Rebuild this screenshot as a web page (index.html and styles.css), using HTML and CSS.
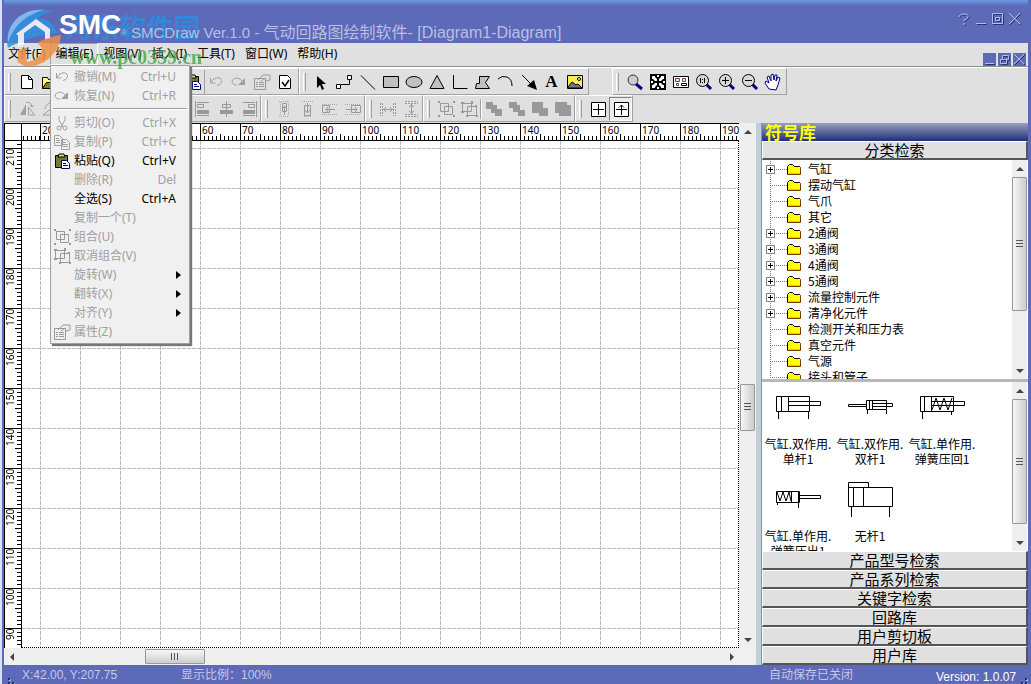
FILE: index.html
```html
<!DOCTYPE html>
<html lang="zh-CN">
<head>
<meta charset="utf-8">
<title>SMCDraw Ver.1.0 - 气动回路图绘制软件- [Diagram1-Diagram]</title>
<link rel="stylesheet" href="styles.css">
</head>
<body>
<svg class="defs" aria-hidden="true">
  <symbol id="i-new" viewBox="0 0 20 20"><path d="M4.500 3.500h7l4 4v9h-11zM11.500 3.500v4h4" fill="#fff" stroke="#000"/></symbol>
  <symbol id="i-open" viewBox="0 0 20 20"><path d="M2.500 16.500v-11h5l1 2h6v3" fill="#ff8" stroke="#000"/><path d="M2.500 16.500l4-6h12l-4 6z" fill="#880" stroke="#000"/></symbol>
  <symbol id="i-save" viewBox="0 0 20 20"><path d="M3.500 3.500h13v13h-13z" fill="#880" stroke="#000"/><path d="M6 4h8v5H6z" fill="#fff"/></symbol>
  <symbol id="i-paste" viewBox="0 0 20 20"><path d="M3.500 4.500h12v12h-12z" fill="#77773c" stroke="#000"/><path d="M6 6l1-3h5l1 3z" fill="#dd6" stroke="#000"/><path d="M9.500 9.500h5l3 3v5h-8z" fill="#fff" stroke="#00007a"/><path d="M11 12.500h3M11 14.500h5" stroke="#00007a"/></symbol>
  <symbol id="i-undo" viewBox="0 0 20 20"><path d="M4.500 6v5h5M5 10.500l2-3q7-4 8.500 1 0 4-4.500 5" fill="none" stroke="#a0a0a0"/></symbol>
  <symbol id="i-redo" viewBox="0 0 20 20"><path d="M8 13q-5 0-5-4 3-5 8.500-1.500l3 3" fill="none" stroke="#a0a0a0"/><path d="M16 6v7H9z" fill="#a0a0a0"/></symbol>
  <symbol id="i-prop" viewBox="0 0 20 20"><path d="M2.500 6.500h11v11h-11z" fill="none" stroke="#999"/><path d="M4 10.500h2M7 10.500h5M4 12.500h2M7 12.500h5M4 14.500h2M7 14.500h5" stroke="#999"/><path d="M6 8l5-5h7v5l-4 1-1-3-4 3" fill="none" stroke="#999"/></symbol>
  <symbol id="i-check" viewBox="0 0 20 20"><path d="M4.500 3.500h8l3 3v10h-11z" fill="#fff" stroke="#000"/><path d="M7 10l3 4 4-6" fill="none" stroke="#000" stroke-width="1.500"/></symbol>
  <symbol id="i-cut" viewBox="0 0 20 20"><path d="M7 3v4l4 7M13 3v4l-4 7" fill="none" stroke="#a0a0a0"/><circle cx="7" cy="15" r="2" fill="none" stroke="#a0a0a0"/><circle cx="13" cy="15" r="2" fill="none" stroke="#a0a0a0"/></symbol>
  <symbol id="i-copy" viewBox="0 0 20 20"><path d="M2.500 3.500h5l3 3v7h-8zM4 6.500h3M4 8.500h4M4 10.500h4M9.500 7.500h5l3 3v7h-8zM11 10.500h3M11 12.500h5M11 14.500h5" fill="#eee" stroke="#a0a0a0"/></symbol>
  <symbol id="i-pointer" viewBox="0 0 20 20"><path d="M5 4v12l3-3 2 5 2-1-2-5h4z"/></symbol>
  <symbol id="i-conn" viewBox="0 0 20 20"><path d="M1.500 12.500h4v4h-4zM12.500 3.500h4v4h-4z" fill="#fff" stroke="#000"/><path d="M6 12.500h8.500V8" fill="none" stroke="#000"/></symbol>
  <symbol id="i-line" viewBox="0 0 20 20"><path d="M3 3.500l14 14" stroke="#000"/></symbol>
  <symbol id="i-rect" viewBox="0 0 20 20"><path d="M2.500 4.500h15v11h-15z" fill="#c0c0c0" stroke="#000"/></symbol>
  <symbol id="i-ell" viewBox="0 0 20 20"><ellipse cx="10" cy="10" rx="8" ry="5.500" fill="#c0c0c0" stroke="#000"/></symbol>
  <symbol id="i-tri" viewBox="0 0 20 20"><path d="M10 3.500l7 13H3z" fill="#c0c0c0" stroke="#000"/></symbol>
  <symbol id="i-l" viewBox="0 0 20 20"><path d="M3.500 3v13.500h14" fill="none" stroke="#000"/></symbol>
  <symbol id="i-poly" viewBox="0 0 20 20"><path d="M6.500 4.500h10l-4 6 4 6H2.500l1-5h3z" fill="#c0c0c0" stroke="#000"/></symbol>
  <symbol id="i-arc" viewBox="0 0 20 20"><path d="M2 7q4-4 9-2t5 9" fill="none" stroke="#000"/></symbol>
  <symbol id="i-arrow" viewBox="0 0 20 20"><path d="M3 3l9 9" stroke="#000"/><path d="M18 18l-10-4 7-6z"/></symbol>
  <symbol id="i-pic" viewBox="0 0 20 20"><path d="M2.500 3.500h15v13h-15z" fill="#f4ee58" stroke="#000"/><path d="M3 15l4-5 4 3 2-1 4 4H3z" fill="#778" stroke="#000"/><circle cx="14" cy="7" r="1.500" fill="#fff" stroke="#000"/></symbol>
  <symbol id="i-mag" viewBox="0 0 20 20"><path d="M11 12l6 5" stroke="#00007f" stroke-width="3"/><circle cx="8" cy="8" r="5" fill="#ccc" stroke="#333"/></symbol>
  <symbol id="i-mag1" viewBox="0 0 20 20"><path d="M12 12l5 5" stroke="#00007f" stroke-width="3"/><circle cx="8.500" cy="8.500" r="6" fill="#d8d8d8" stroke="#000"/><path d="M6.500 6v5M10.500 6v5M8.500 7v1M8.500 10v1" stroke="#000"/></symbol>
  <symbol id="i-magp" viewBox="0 0 20 20"><path d="M12 12l5 5" stroke="#00007f" stroke-width="3"/><circle cx="8.500" cy="8.500" r="6" fill="#d8d8d8" stroke="#000"/><path d="M5 8.500h7M8.500 5v7" stroke="#000"/></symbol>
  <symbol id="i-magm" viewBox="0 0 20 20"><path d="M12 12l5 5" stroke="#00007f" stroke-width="3"/><circle cx="8.500" cy="8.500" r="6" fill="#d8d8d8" stroke="#000"/><path d="M5 8.500h7" stroke="#000"/></symbol>
  <symbol id="i-fit" viewBox="0 0 20 20"><path d="M2 2h16v16H2z"/><path d="M4 4h3v1l2 2v2H7L5 7H4zM16 4h-3v1l-2 2v2h2l2-2h1zM4 16h3v-1l2-2v-2H7l-2 2H4zM16 16h-3v-1l-2-2v-2h2l2 2h1zM9 3h2v2H9zM9 15h2v2H9zM3 9h2v2H3zM15 9h2v2h-2z" fill="#fff"/></symbol>
  <symbol id="i-page" viewBox="0 0 20 20"><path d="M2.500 4.500h15v11h-15z" fill="#fff" stroke="#000"/><path d="M4.500 6.500h4v3h-4zM5.500 11.500h2v2h-2zM11.500 6.500h3v3h-3z" fill="#eee" stroke="#744"/><path d="M10.500 11.500h5v2h-5z" fill="none" stroke="#000"/></symbol>
  <symbol id="i-hand" viewBox="0 0 20 20"><path d="M6 17l-4-6 1-2 3 2-2-6 2-1 2 5V3l2-1 1 6 1-5h2l-1 6 2-4 2 1-2 7-2 5z" fill="#fff" stroke="#00007f"/></symbol>
  <symbol id="i-flip" viewBox="0 0 20 20"><path d="M9 5v11H3z" fill="#a0a0a0"/><path d="M11.500 8v8h6zM9 3.500q5-1 6 4M13 6l2 2 2-2" fill="none" stroke="#a0a0a0"/></symbol>
  <symbol id="i-rot" viewBox="0 0 20 20"><path d="M3 16h13L12 9zM5 10q0-5 6-6M9 2l3 2-2 3" fill="none" stroke="#a0a0a0"/></symbol>
  <symbol id="i-al" viewBox="0 0 20 20"><path d="M2.500 2v16M4 3.500h12M4 16.500h12" stroke="#999"/><path d="M4.500 5.500h6v3h-6z" fill="none" stroke="#999"/><path d="M4 11h12v4H4z" fill="#999"/></symbol>
  <symbol id="i-ac" viewBox="0 0 20 20"><path d="M10.500 2v16" stroke="#999"/><path d="M6.500 5.500h8v3h-8z" fill="none" stroke="#999"/><path d="M4 11h13v4H4z" fill="#999"/></symbol>
  <symbol id="i-ar" viewBox="0 0 20 20"><path d="M17.500 2v16M4 3.500h12M4 16.500h12" stroke="#999"/><path d="M9.500 5.500h6v3h-6z" fill="none" stroke="#999"/><path d="M4 11h12v4H4z" fill="#999"/></symbol>
  <symbol id="i-v1" viewBox="0 0 20 20"><path d="M5 2.500h10M6.500 3v14M14.500 3v14M5 17.500h10" stroke="#aaa" stroke-dasharray="1 1"/><path d="M8.500 4.500h4v8h-4zM10.500 7v9M9 9l1.500-2L12 9" fill="none" stroke="#999"/></symbol>
  <symbol id="i-v2" viewBox="0 0 20 20"><path d="M5 2.500h11M7 17.500h7" stroke="#aaa" stroke-dasharray="1 1"/><path d="M7.500 6.500h6v10h-6zM10.500 4v9M8 11l2.500 3L13 11" fill="none" stroke="#999"/></symbol>
  <symbol id="i-h1" viewBox="0 0 20 20"><path d="M2 5.500h16M2 15.500h16" stroke="#aaa" stroke-dasharray="1 1"/><path d="M2.500 6.500h7v7h-7zM15 10.500H5M8 8l-2 2.500L8 13" fill="none" stroke="#999"/></symbol>
  <symbol id="i-h2" viewBox="0 0 20 20"><path d="M2 5.500h16M2 15.500h16" stroke="#aaa" stroke-dasharray="1 1"/><path d="M8.500 6.500h9v7h-9zM3 10.500h11M12 8l2 2.500-2 2.500" fill="none" stroke="#999"/></symbol>
  <symbol id="i-sh" viewBox="0 0 20 20"><path d="M2.500 4v13M4.500 4v13M15.500 4v13M17.500 4v13" stroke="#999" stroke-dasharray="2 1"/><path d="M5 10.500h10M8 8l-2 2.500L8 13M12 8l2 2.500-2 2.500" fill="none" stroke="#999"/></symbol>
  <symbol id="i-sv" viewBox="0 0 20 20"><path d="M4 2.500h13M4 4.500h13M4 15.500h13M4 17.500h13" stroke="#999" stroke-dasharray="2 1"/><path d="M10.500 5v10M8 8l2.500-2L13 8M8 12l2.500 2 2.500-2" fill="none" stroke="#999"/></symbol>
  <symbol id="i-grp" viewBox="0 0 20 20"><path d="M4.500 4.500h8v8h-8zM8.500 7.500h8v8h-8z" fill="none" stroke="#999"/><path d="M2 2h2v2H2zM17 2h2v2h-2zM2 16h2v2H2zM17 16h2v2h-2z" fill="#999"/></symbol>
  <symbol id="i-ungrp" viewBox="0 0 20 20"><path d="M3.500 4.500h9v8h-9zM8.500 7.500h9v9h-9z" fill="none" stroke="#999"/><path d="M2 3h3v2H2zM12 2h2v3h-2zM2 12h3v2H2zM16 6h2v2h-2zM17 16h2v2h-2zM7 16h2v2H7z" fill="#999"/></symbol>
  <symbol id="i-o1" viewBox="0 0 20 20"><path d="M2 3h7v3h4v4h5v7h-7v-3H7v-4H2z" fill="#999"/></symbol>
  <symbol id="i-o2" viewBox="0 0 20 20"><path d="M2 3h8v3h3v5h5v6h-7v-4H6V9H2z" fill="#999"/></symbol>
  <symbol id="i-o3" viewBox="0 0 20 20"><path d="M2 3h11v6h5v8h-9v-3H2z" fill="#999"/></symbol>
  <symbol id="i-o4" viewBox="0 0 20 20"><path d="M2 3h12v3h4v11H6v-3H2z" fill="#999"/></symbol>
  <symbol id="i-grid" viewBox="0 0 20 20"><path d="M3.500 3.500h14v14h-14zM10.500 5v11M5 10.500h11" fill="#fff" stroke="#000"/></symbol>
  <symbol id="i-snap" viewBox="0 0 20 20"><path d="M3.500 3.500h14v14h-14z" fill="#fff" stroke="#000"/><path d="M10.500 6v10M5 10.500h11M8 8.500l2.500-2.500L13 8.500" fill="none" stroke="#000"/></symbol>
  <symbol id="t-plus" viewBox="0 0 21 16"><path d="M4.500 0v16M10 8.500h11" stroke="#808080" stroke-dasharray="1 1"/><path d="M.5 4.500h8v8h-8z" fill="#fff" stroke="#808080"/><path d="M2 8.500h5M4.500 6v5" stroke="#000"/></symbol>
  <symbol id="t-leaf" viewBox="0 0 21 16"><path d="M4.500 0v16M6 8.500h15" stroke="#808080" stroke-dasharray="1 1"/></symbol>
  <symbol id="t-dir" viewBox="0 0 15 16"><path d="M.5 13.500v-9l2-1h3l2 2h5l1 1v7z" fill="#ff0"/><path d="M.5 13.500v-8l2-2h3l2 2h5l1 1" fill="none" stroke="#000"/><path d="M.5 13.500h13v-7" fill="none" stroke="#7a3c00"/><path d="M2 12.500h11" stroke="#ffb400"/></symbol>
</svg>

<div class="window">
  <header class="title">
    <span class="mark" aria-hidden="true">河东软件园</span>
    <span class="brand">SMC</span>
    <span class="dot">®</span>
    <h1>SMCDraw Ver.1.0 - <span>气动回路图绘制软件- [Diagram1-Diagram]</span></h1>
    <div class="caption">
      <button aria-label="帮助"><svg viewBox="0 0 14 14"><path d="M2 5q0-3 5-3 5 0 4 3-1 2-4 3v1M7 11v2" class="emb"/></svg></button>
      <button aria-label="最小化"><svg viewBox="0 0 14 14"><path d="M2 11.500h10" class="emb"/></svg></button>
      <button aria-label="最大化"><svg viewBox="0 0 14 14"><path d="M1.500 1.500h10v10h-10zM4.500 5.500h4v3h-4z" class="emb"/></svg></button>
      <button aria-label="关闭"><svg viewBox="0 0 14 14"><path d="M1 1l11 11M12 1L1 12" class="emb"/></svg></button>
    </div>
  </header>

  <nav class="menubar">
    <button>文件(F)</button><button class="open">编辑(E)</button><button>视图(V)</button><button>插入(I)</button><button>工具(T)</button><button>窗口(W)</button><button>帮助(H)</button>
    <div class="mdi">
      <button aria-label="最小化窗口"><svg viewBox="0 0 13 13"><path d="M2 10.500h9" class="emb"/></svg></button>
      <button aria-label="还原窗口"><svg viewBox="0 0 13 13"><path d="M4.500 2.500h6v4h-6zM2.500 6.500h6v4h-6z" class="emb"/></svg></button>
      <button aria-label="关闭窗口"><svg viewBox="0 0 13 13"><path d="M1 1l10 10M11 1L1 11" class="emb"/></svg></button>
    </div>
  </nav>

  <div class="bars">
    <div class="bar">
      <div class="band">
        <button aria-label="新建"><svg><use href="#i-new"/></svg></button><button aria-label="打开"><svg><use href="#i-open"/></svg></button><button aria-label="保存"><svg><use href="#i-save"/></svg></button><button aria-label="打印"><svg><use href="#i-page"/></svg></button><button aria-label="预览"><svg><use href="#i-mag"/></svg></button><button aria-label="剪切"><svg><use href="#i-cut"/></svg></button><button aria-label="复制"><svg><use href="#i-copy"/></svg></button><i class="sep"></i><button aria-label="粘贴"><svg><use href="#i-paste"/></svg></button><button aria-label="撤销" class="after-line"><svg><use href="#i-undo"/></svg></button><button aria-label="恢复"><svg><use href="#i-redo"/></svg></button><button aria-label="属性"><svg><use href="#i-prop"/></svg></button><button aria-label="检查"><svg><use href="#i-check"/></svg></button>
      </div>
      <div class="band">
        <button aria-label="选择"><svg><use href="#i-pointer"/></svg></button><button aria-label="连接线"><svg><use href="#i-conn"/></svg></button><button aria-label="直线"><svg><use href="#i-line"/></svg></button><button aria-label="矩形"><svg><use href="#i-rect"/></svg></button><button aria-label="椭圆"><svg><use href="#i-ell"/></svg></button><button aria-label="三角形"><svg><use href="#i-tri"/></svg></button><button aria-label="折线"><svg><use href="#i-l"/></svg></button><button aria-label="多边形"><svg><use href="#i-poly"/></svg></button><button aria-label="弧"><svg><use href="#i-arc"/></svg></button><button aria-label="箭头"><svg><use href="#i-arrow"/></svg></button><button class="letter">A</button><button aria-label="图片"><svg><use href="#i-pic"/></svg></button>
      </div>
      <div class="band apart">
        <button aria-label="缩放"><svg><use href="#i-mag"/></svg></button><button aria-label="适合窗口"><svg><use href="#i-fit"/></svg></button><button aria-label="整页"><svg><use href="#i-page"/></svg></button><button aria-label="实际大小"><svg><use href="#i-mag1"/></svg></button><button aria-label="放大"><svg><use href="#i-magp"/></svg></button><button aria-label="缩小"><svg><use href="#i-magm"/></svg></button><button aria-label="平移"><svg><use href="#i-hand"/></svg></button>
      </div>
    </div>
    <div class="bar tight">
      <div class="band">
        <button aria-label="水平翻转"><svg><use href="#i-flip"/></svg></button><button aria-label="旋转"><svg><use href="#i-rot"/></svg></button><span class="covered"></span><button aria-label="左对齐"><svg><use href="#i-al"/></svg></button><button aria-label="居中"><svg><use href="#i-ac"/></svg></button><button aria-label="右对齐"><svg><use href="#i-ar"/></svg></button>
      </div>
      <div class="band">
        <button aria-label="上移"><svg><use href="#i-v1"/></svg></button><button aria-label="下移"><svg><use href="#i-v2"/></svg></button><button aria-label="左移"><svg><use href="#i-h1"/></svg></button><button aria-label="右移"><svg><use href="#i-h2"/></svg></button>
      </div>
      <div class="band">
        <button aria-label="水平等距"><svg><use href="#i-sh"/></svg></button><button aria-label="垂直等距"><svg><use href="#i-sv"/></svg></button>
      </div>
      <div class="band">
        <button aria-label="组合"><svg><use href="#i-grp"/></svg></button><button aria-label="取消组合"><svg><use href="#i-ungrp"/></svg></button><i class="sep thin"></i><button aria-label="置顶"><svg><use href="#i-o1"/></svg></button><button aria-label="置底"><svg><use href="#i-o2"/></svg></button><button aria-label="上一层"><svg><use href="#i-o3"/></svg></button><button aria-label="下一层"><svg><use href="#i-o4"/></svg></button>
      </div>
      <div class="band">
        <button aria-label="网格"><svg><use href="#i-grid"/></svg></button><button class="pressed" aria-label="对齐网格"><svg><use href="#i-snap"/></svg></button>
      </div>
    </div>
  </div>

  <main class="work">
    <section class="editor">
      <div class="corner"></div>
      <div class="ruler across"><span class="lead"></span><span>20</span><span>30</span><span>40</span><span>50</span><span>60</span><span>70</span><span>80</span><span>90</span><span>100</span><span>110</span><span>120</span><span>130</span><span>140</span><span>150</span><span>160</span><span>170</span><span>180</span><span>190</span></div>
      <div class="ruler down"><span class="lead"></span><span>210</span><span>200</span><span>190</span><span>180</span><span>170</span><span>160</span><span>150</span><span>140</span><span>130</span><span>120</span><span>110</span><span>100</span><span>90</span></div>
      <div class="sheet"><svg width="100%" height="100%"><defs><pattern id="grid" width="40" height="40" patternUnits="userSpaceOnUse"><path d="M18.500 0v40M0 7.500h40" stroke="#b8b8b8" stroke-dasharray="4 1"/></pattern></defs><rect width="100%" height="100%" fill="url(#grid)"/></svg></div>
      <div class="scroll vert main-v"><button class="up" aria-label="向上"></button><div class="before"></div><div class="thumb"></div><div class="after"></div><button class="dn" aria-label="向下"></button></div>
      <div class="scroll horz"><button class="lf" aria-label="向左"></button><div class="before"></div><div class="thumb"></div><div class="after"></div><button class="rt" aria-label="向右"></button></div>
    </section>

    <aside class="library">
      <h2>符号库</h2>
      <button class="fold">分类检索</button>
      <div class="pane tree">
        <ul>
          <li><svg class="br"><use href="#t-plus"/></svg><svg class="dir"><use href="#t-dir"/></svg>气缸</li>
          <li><svg class="br"><use href="#t-leaf"/></svg><svg class="dir"><use href="#t-dir"/></svg>摆动气缸</li>
          <li><svg class="br"><use href="#t-leaf"/></svg><svg class="dir"><use href="#t-dir"/></svg>气爪</li>
          <li><svg class="br"><use href="#t-leaf"/></svg><svg class="dir"><use href="#t-dir"/></svg>其它</li>
          <li><svg class="br"><use href="#t-plus"/></svg><svg class="dir"><use href="#t-dir"/></svg>2通阀</li>
          <li><svg class="br"><use href="#t-plus"/></svg><svg class="dir"><use href="#t-dir"/></svg>3通阀</li>
          <li><svg class="br"><use href="#t-plus"/></svg><svg class="dir"><use href="#t-dir"/></svg>4通阀</li>
          <li><svg class="br"><use href="#t-plus"/></svg><svg class="dir"><use href="#t-dir"/></svg>5通阀</li>
          <li><svg class="br"><use href="#t-plus"/></svg><svg class="dir"><use href="#t-dir"/></svg>流量控制元件</li>
          <li><svg class="br"><use href="#t-plus"/></svg><svg class="dir"><use href="#t-dir"/></svg>清净化元件</li>
          <li><svg class="br"><use href="#t-leaf"/></svg><svg class="dir"><use href="#t-dir"/></svg>检测开关和压力表</li>
          <li><svg class="br"><use href="#t-leaf"/></svg><svg class="dir"><use href="#t-dir"/></svg>真空元件</li>
          <li><svg class="br"><use href="#t-leaf"/></svg><svg class="dir"><use href="#t-dir"/></svg>气源</li>
          <li><svg class="br"><use href="#t-leaf"/></svg><svg class="dir"><use href="#t-dir"/></svg>接头和管子</li>
        </ul>
        <div class="scroll vert tree-v"><button class="up" aria-label="向上"></button><div class="thumb"></div><div class="after"></div><button class="dn" aria-label="向下"></button></div>
      </div>
      <div class="pane parts">
        <div class="grid">
          <figure><svg viewBox="0 0 48 40"><path d="M2.500 10.500h33v15h-33zM7.500 10v15M14.500 10v15M14.500 15.500h32v4h-32M4.500 26v7M34.500 26v7"/></svg><figcaption>气缸.双作用.<br>单杆1</figcaption></figure>
          <figure><svg viewBox="0 0 48 40"><path d="M20.500 14.500h20v9h-20zM23.500 14v9M26.500 14v9M2.500 18.500h18v2h-18zM26.500 17.500h20v3h-20M21.500 24v4M40.500 24v4"/></svg><figcaption>气缸.双作用.<br>双杆1</figcaption></figure>
          <figure><svg viewBox="0 0 48 40"><path d="M2.500 10.500h33v15h-33zM6.500 10v15M13.500 10v15M13.500 15.500h33v4h-33M4.500 26v7M33.500 26v3M14 24l4-12 4 12 4-12 4 12 4-12"/></svg><figcaption>气缸.单作用.<br>弹簧压回1</figcaption></figure>
          <figure><svg viewBox="0 0 48 40"><path d="M2.500 13.500h23v11h-23zM17.500 13v11M24.500 13v11M25.500 17.500h21v3h-21M3.500 25v2M24.500 25v5M3 14l3 9 3-9 3 9 3-9 2 9"/></svg><figcaption>气缸.单作用.<br>弹簧压出1</figcaption></figure>
          <figure><svg viewBox="0 0 48 40"><path d="M2.500 4.500h20v5h-20zM2.500 9.500h44v19h-44zM7.500 10v19M17.500 10v19M5.500 29v10M43.500 29v10"/></svg><figcaption>无杆1</figcaption></figure>
        </div>
        <div class="scroll vert parts-v"><button class="up" aria-label="向上"></button><div class="thumb"></div><div class="after"></div><button class="dn" aria-label="向下"></button></div>
      </div>
      <button class="fold">产品型号检索</button>
      <button class="fold">产品系列检索</button>
      <button class="fold">关键字检索</button>
      <button class="fold">回路库</button>
      <button class="fold">用户剪切板</button>
      <button class="fold">用户库</button>
    </aside>
  </main>

  <footer class="status">
    <svg class="grip" viewBox="0 0 12 12"><path d="M2 1v2M2 5v2M6 5v2M2 9v2M6 9v2M10 9v2"/></svg>
    <span>X:42.00, Y:207.75</span>
    <span>显示比例：100%</span>
    <span>自动保存已关闭</span>
    <span class="ver">Version: 1.0.07</span>
    <svg class="grip" viewBox="0 0 12 12"><path d="M10 1v2M10 5v2M6 5v2M2 9v2M6 9v2M10 9v2"/></svg>
  </footer>
</div>

<div class="popup" role="menu">
  <button disabled><svg><use href="#i-undo"/></svg><span>撤销(M)</span><kbd>Ctrl+U</kbd></button>
  <button disabled><svg><use href="#i-redo"/></svg><span>恢复(N)</span><kbd>Ctrl+R</kbd></button>
  <hr>
  <button disabled><svg><use href="#i-cut"/></svg><span>剪切(O)</span><kbd>Ctrl+X</kbd></button>
  <button disabled><svg><use href="#i-copy"/></svg><span>复制(P)</span><kbd>Ctrl+C</kbd></button>
  <button><svg><use href="#i-paste"/></svg><span>粘贴(Q)</span><kbd>Ctrl+V</kbd></button>
  <button disabled><svg></svg><span>删除(R)</span><kbd>Del</kbd></button>
  <button><svg></svg><span>全选(S)</span><kbd>Ctrl+A</kbd></button>
  <button disabled><svg></svg><span>复制一个(T)</span></button>
  <button disabled><svg><use href="#i-grp"/></svg><span>组合(U)</span></button>
  <button disabled><svg><use href="#i-ungrp"/></svg><span>取消组合(V)</span></button>
  <button disabled class="sub"><svg></svg><span>旋转(W)</span></button>
  <button disabled class="sub"><svg></svg><span>翻转(X)</span></button>
  <button disabled class="sub"><svg></svg><span>对齐(Y)</span></button>
  <button disabled><svg><use href="#i-prop"/></svg><span>属性(Z)</span></button>
</div>

<div class="stamp" aria-hidden="true">
  <svg viewBox="0 0 64 70">
    <path d="M12 52c3 8 8 13 14 14 18 2 34-14 35-31-8 1-18 4-24 8 4 2 6 6 4 10-2 5-8 8-14 9l-1-14-8 2v11c-3-2-5-5-6-9z" fill="#ef8f45"/>
    <path d="M8 48C2 26 22 4 53 11c-7 1-13 4-16 8 9-1 17 4 20 14C40 34 22 40 8 48z" fill="#2f93de"/>
    <path d="M8 43C6 24 22 8 44 10 27 14 13 26 8 43z" fill="#8cc4f0"/>
    <path d="M16 34l20-15 14 10v9l-5 1v-7l-10-7-11 8v11l-6 2V35z" fill="#fff"/>
  </svg>
  <span>www.pc0359.cn</span>
</div>
</body>
</html>
```
FILE: styles.css
```css
* { box-sizing: border-box; }
body {
  margin: 0;
  height: 100vh;
  overflow: hidden;
  position: relative;
  background: #d8e3f0;
  font: 12px/16px "Noto Sans", "Noto Sans CJK SC", sans-serif;
  color: #000;
}
button {
  margin: 0;
  padding: 0;
  border: 0;
  background: none;
  font: inherit;
  color: inherit;
}
.defs { position: absolute; width: 0; height: 0; }

.window {
  height: 100%;
  margin-left: 2px;
  display: flex;
  flex-direction: column;
  background: #e0e0e0;
  border-left: 2px solid #5d6ab7;
  border-right: 3px solid #5d6ab7;
}

/* Title bar */
.title {
  height: 43px;
  display: flex;
  align-items: flex-end;
  position: relative;
  padding: 0 6px 0 55px;
  background: linear-gradient(#6a9be6, #5d6ab7 6px);
  color: #b9bfe6;
  font-family: "Liberation Sans", "Noto Sans CJK SC", sans-serif;
}
.mark {
  position: absolute;
  left: 61px;
  top: 11px;
  font: bold 27px/32px "Noto Sans CJK SC", sans-serif;
  color: #2e8ee0;
  opacity: .85;
}
.brand {
  position: relative;
  flex: none;
  width: 60px;
  font: bold 28px/37px "Liberation Sans", sans-serif;
  color: #fff;
}
.dot { position: relative; flex: none; width: 12px; padding-left: 2px; font-size: 8px; line-height: 20px; }
.title h1 {
  position: relative;
  flex: 1;
  margin: 0;
  font-size: 15px;
  font-weight: normal;
  line-height: 20px;
  white-space: nowrap;
}
.title h1 span { font-size: 16px; }
.caption { display: flex; gap: 3px; align-self: flex-start; padding-top: 12px; }
.caption svg, .mdi svg { display: block; width: 14px; height: 14px; }
.emb { fill: none; stroke: #b4bdf0; stroke-width: 1; filter: drop-shadow(1px 1px 0 #2c3470); }

/* Menu bar */
.menubar {
  height: 24px;
  display: flex;
  border-bottom: 1px solid #8e8e8e;
}
.menubar > button { padding: 0 5px; height: 22px; }
.menubar > button:first-child { padding-left: 4px; }
.menubar > .open { border: 1px solid #a0a0a0; border-color: #a0a0a0 #fff #fff #a0a0a0; padding: 0 4px; }
.mdi { display: flex; gap: 2px; margin-left: auto; align-self: flex-end; padding-right: 2px; }
.mdi button { background: #5d6ab7; }
.mdi svg { width: 13px; height: 13px; }

/* Tool bars */
.bars { display: flex; flex-direction: column; border-top: 1px solid #fff; padding-bottom: 1px; }
.bar { display: flex; height: 27px; }
.band {
  display: flex;
  align-items: center;
  padding: 0 2px 0 10px;
  border: 1px solid #a0a0a0;
  border-color: #fff #a0a0a0 #a0a0a0 #fff;
  background: linear-gradient(#fff, #fff) 3px 4px / 1px 18px no-repeat, linear-gradient(#a0a0a0, #a0a0a0) 5px 4px / 1px 18px no-repeat;
}
.tight .band { padding-right: 0; }
.band.apart { margin-left: 23px; }
.band button { width: 23px; height: 24px; display: grid; place-items: center; }
.band svg { width: 20px; height: 20px; }
.band .letter { font: bold 17px/20px "Liberation Serif", serif; }
.band .after-line { border-left: 1px solid #a0a0a0; }
.band .pressed { border: 1px solid #808080; border-color: #808080 #fff #fff #808080; background: #ececec; }
.sep { width: 5px; height: 20px; border-left: 1px solid #a0a0a0; }
.sep.thin { width: 2px; border-right: 1px solid #fff; }
.covered { width: 130px; }

/* Work area */
.work { flex: 1; min-height: 0; display: grid; grid-template-columns: 1fr 267px; gap: 5px; background: #c0ceda; }
.editor {
  min-width: 0;
  min-height: 0;
  display: grid;
  grid-template: 18px 1fr 17px / 18px 1fr 17px;
  background: #f0f0f0;
}
.corner { background: #fff; border: 1px solid #000; }
.ruler { display: flex; overflow: hidden; background-color: #fff; font-size: 10px; line-height: 10px; }
.ruler span { flex: none; border: 0 solid #000; }
.across { border-top: 1px solid #000; border-bottom: 1px solid #000; }
.across span {
  width: 40px;
  border-left-width: 1px;
  padding: 1px 0 0 1px;
  background:
    linear-gradient(#000, #000) 19px 100% / 1px 6px no-repeat,
    repeating-linear-gradient(90deg, transparent 0 3px, #000 3px 4px) 0 100% / 39px 4px no-repeat;
}
.across .lead { width: 18px; border-left: 0; background: repeating-linear-gradient(90deg, transparent 0 1px, #000 1px 2px, transparent 2px 4px) 0 100% / 100% 4px no-repeat; }
.down { flex-direction: column; border-left: 1px solid #000; border-right: 1px solid #000; }
.down span {
  height: 40px;
  border-bottom-width: 1px;
  padding: 1px 0 0 6px;
  writing-mode: vertical-rl;
  transform: rotate(180deg);
  text-align: right;
  background:
    linear-gradient(#000, #000) 0 19px / 6px 1px no-repeat,
    repeating-linear-gradient(180deg, transparent 0 3px, #000 3px 4px) 0 0 / 4px 39px no-repeat;
}
.down .lead { height: 7px; border: 0; background: linear-gradient(#000, #000) 0 3px / 4px 1px no-repeat; }
.sheet { min-height: 0; overflow: hidden; background: #fff; border: 1px dotted #000; border-width: 0 1px 1px 0; }
.sheet svg { display: block; }
.main-v { grid-area: 1 / 3 / 3 / 4; }
.horz { grid-area: 3 / 1 / 4 / 3; }

/* Scroll bars */
.scroll { display: flex; background: #efefef; }
.vert { flex-direction: column; width: 15px; }
.scroll button { flex: none; width: 15px; height: 17px; display: grid; place-items: center; }
.scroll button::before { content: ""; border: 3px solid transparent; }
.scroll .up::before { border-width: 0 4px 4px; border-bottom-color: #444; }
.scroll .dn::before { border-width: 4px 4px 0; border-top-color: #444; }
.scroll .lf::before { border-width: 4px 4px 4px 0; border-right-color: #444; }
.scroll .rt::before { border-width: 4px 0 4px 4px; border-left-color: #444; }
.thumb {
  border: 1px solid #989898;
  border-radius: 1px;
  display: grid;
  place-items: center;
  background: linear-gradient(90deg, #f6f6f6, #e2e2e2 50%, #cccccc);
}
.thumb::before { content: ""; width: 7px; height: 8px; background: repeating-linear-gradient(#555 0 1px, transparent 1px 3px); }
.horz .thumb { background: linear-gradient(#f6f6f6, #e2e2e2 50%, #cccccc); margin: 1px 0; }
.horz .thumb::before { width: 8px; height: 7px; background: repeating-linear-gradient(90deg, #555 0 1px, transparent 1px 3px); }
.main-v { margin-left: 1px; }
.main-v .before { flex: 245; }
.main-v .thumb { height: 47px; }
.main-v .after { flex: 201; }
.horz .before { flex: 126; }
.horz .thumb { width: 60px; }
.horz .after { flex: 517; }
.tree-v .thumb { flex: 131; }
.tree-v .after { flex: 51; }
.parts-v .thumb { flex: 125; }
.parts-v .after { flex: 10; }

/* Symbol library */
.library { min-width: 0; min-height: 0; display: flex; flex-direction: column; border-left: 1px solid #8a94a4; }
.library h2 {
  flex: none;
  margin: 0;
  padding-left: 3px;
  height: 18px;
  background: linear-gradient(#98a0c2, #1f2f78);
  color: #ff0;
  font: bold 17px/18px "Noto Sans CJK SC", sans-serif;
}
.fold {
  flex: none;
  height: 19px;
  border: 1px solid #555;
  border-color: #fff #555 #555 #fff;
  border-bottom-width: 2px;
  border-right-width: 2px;
  background: #e0e0e0;
  font: 15px/16px "Noto Sans CJK SC", sans-serif;
}
.pane { min-height: 0; display: flex; justify-content: space-between; overflow: hidden; background: #fff; padding-right: 1px; font-family: "Noto Sans CJK SC", sans-serif; }
.tree { flex: 221; border-bottom: 3px solid #b8b8b8; }
.parts { flex: 170; }
.tree ul { list-style: none; margin: 0; padding: 1px 0 0 4px; }
.tree li { display: flex; height: 16px; white-space: nowrap; line-height: 15px; }
.br { width: 21px; height: 16px; }
.dir { width: 15px; height: 16px; margin-right: 6px; }
.parts .grid { display: grid; grid-template-columns: repeat(3, 72px); grid-auto-rows: 92px; }
figure { margin: 0; padding-top: 4px; text-align: center; }
figure svg { display: block; width: 48px; height: 40px; margin: 0 auto 10px; fill: none; stroke: #000; }
figcaption { line-height: 15px; white-space: nowrap; }

/* Status bar */
.status {
  flex: none;
  display: grid;
  grid-template-columns: 18px 159px 1fr 167px 80px 12px;
  height: 19px;
  background: #5d6ab7;
  color: #c3c8ec;
  font-family: "Liberation Sans", "Noto Sans CJK SC", sans-serif;
  line-height: 21px;
  white-space: nowrap;
  overflow: hidden;
}
.ver { color: #fff; line-height: 24px; }
.grip { width: 12px; height: 12px; align-self: end; justify-self: center; fill: none; stroke: #222c78; stroke-width: 2; filter: drop-shadow(1px 1px 0 #aab4e6); }

/* Edit menu */
.popup {
  position: absolute;
  left: 50px;
  top: 65px;
  width: 140px;
  padding: 1px 2px 2px;
  display: flex;
  flex-direction: column;
  background: #f0f0f0;
  border: 1px solid #a0a0a0;
  box-shadow: 2px 2px 1px #777;
}
.popup button { display: flex; align-items: center; height: 19px; padding-right: 11px; text-align: left; }
.popup button:disabled { color: #a0a0a0; }
.popup svg { width: 20px; height: 20px; margin: 0 2px 0 -1px; }
.popup span { flex: 1; white-space: nowrap; }
.popup kbd { font: inherit; }
.popup hr { width: 100%; height: 2px; margin: 3px 0; border: 0; background: linear-gradient(#a0a0a0 50%, #fff 50%); }
.sub::after { content: ""; margin-right: -5px; border: 4px solid transparent; border-left: 5px solid #000; border-right: 0; }

/* Site stamp */
.stamp { position: absolute; left: 0; top: 0; pointer-events: none; }
.stamp svg { display: block; width: 64px; height: 70px; opacity: .85; }
.stamp span {
  position: absolute;
  left: 70px;
  top: 47px;
  font: bold 20px/20px "Liberation Serif", serif;
  color: #3ba53b;
  opacity: .75;
}
```
